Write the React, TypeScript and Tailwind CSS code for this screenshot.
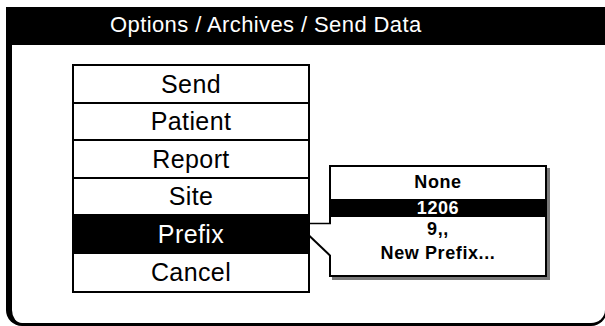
import React from "react";

const items = ["Send", "Patient", "Report", "Site", "Prefix", "Cancel"];
const prefixes = [
  { label: "None", cls: "h-[24px]" },
  { label: "1206", cls: "h-[18px] mt-[5px] bg-black text-white" },
  { label: "9,,", cls: "h-[24px]" },
  { label: "New Prefix...", cls: "h-[24px]" },
];

export default function App() {
  return (
    <div className="relative w-[605px] h-[326px] overflow-hidden bg-white font-['Liberation_Sans',Arial,sans-serif] text-black">
      <div className="ml-[6px] mt-[7px] flex h-[319px] w-[601px] flex-col">
        <div className="h-[38px] shrink-0 bg-black pl-[104px] pt-[5px] text-[22px] leading-[26px] tracking-[0.4px] text-white">
          Options / Archives / Send Data
        </div>
        <div className="flex-1 rounded-b-[16px] border-b-[3px] border-l-[6px] border-r-[2px] border-black">
          <div className="ml-[60px] mt-[19px] flex w-[238px] flex-col divide-y-2 divide-black border-2 border-black">
            {items.map((it) => (
              <div
                key={it}
                className={
                  "flex h-[37.5px] items-center justify-center pt-[1px] text-[25px] leading-none tracking-[0.4px] " +
                  (it === "Prefix" ? "bg-black text-white" : "")
                }
              >
                {it}
              </div>
            ))}
          </div>
        </div>
      </div>

      <div className="absolute left-[329px] top-[165px] flex h-[112px] w-[218px] flex-col border-2 border-black bg-white pt-[3px] shadow-[3px_3px_0_#7a7a7a]">
        {prefixes.map((p) => (
          <div
            key={p.label}
            className={"flex items-center justify-center text-[18px] font-bold leading-none tracking-[0.6px] " + p.cls}
          >
            {p.label}
          </div>
        ))}
      </div>

      <svg className="pointer-events-none absolute left-0 top-0" width="605" height="326" viewBox="0 0 605 326">
        <rect x="328.5" y="224" width="3" height="31" fill="#fff" />
        <path d="M308 223.5 H331" stroke="#000" strokeWidth="1.5" fill="none" />
        <path d="M308.5 235 L330 255.5" stroke="#000" strokeWidth="2" fill="none" />
      </svg>
    </div>
  );
}
